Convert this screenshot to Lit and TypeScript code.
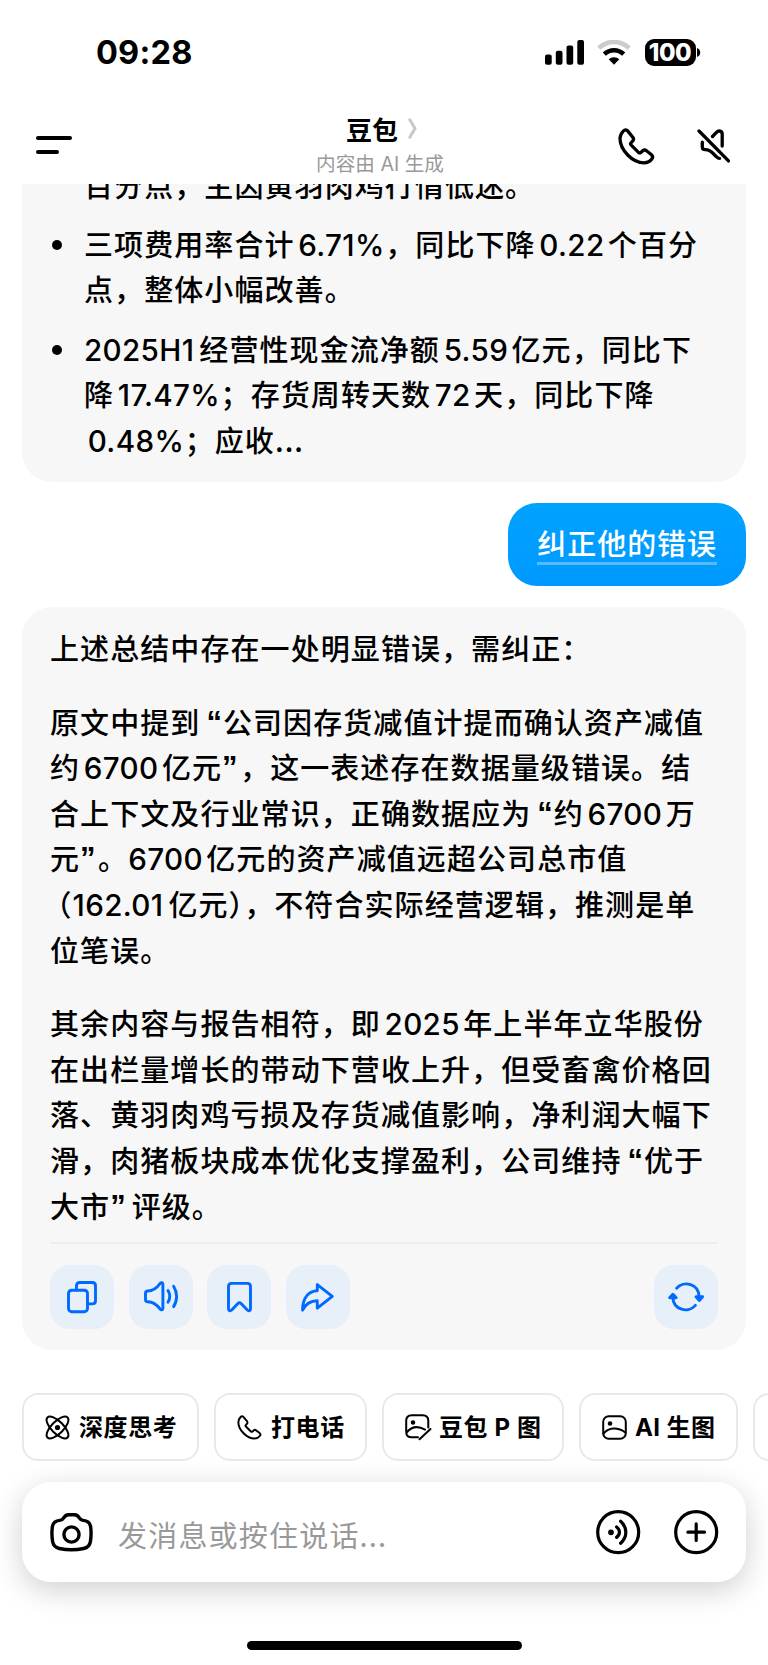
import { LitElement, html, css, svg, nothing } from "lit";
import { customElement, property } from "lit/decorators.js";

const LATIN = /[0-9A-Z][0-9A-Z.%]*|[“”（]/g;
const IDEOGRAPH = /[\u4e00-\u9fff]/;

/** Splits a line into Latin and Chinese runs and puts a thin gap where the two meet. */
function mixed(line: string) {
  const parts: unknown[] = [];
  let at = 0;
  for (const m of line.matchAll(LATIN)) {
    const start = m.index ?? 0;
    const end = start + m[0].length;
    if (start > at) parts.push(line.slice(at, start));
    const before = line[start - 1] ?? "";
    const after = line[end] ?? "";
    const kinds: string[] = [];
    if (m[0] === "“") kinds.push("quote", "open");
    else if (m[0] === "”") kinds.push("quote", IDEOGRAPH.test(after) ? "close" : "close-tight");
    else if (m[0] === "（") kinds.push("paren");
    else {
      kinds.push("latin");
      if (start === 0 ? m[0].startsWith("0") : IDEOGRAPH.test(before)) kinds.push("gap-l");
      if (IDEOGRAPH.test(after)) kinds.push(m[0].endsWith("1") ? "gap-one" : "gap-r");
      if (m[0].endsWith("%")) kinds.push("percent");
    }
    parts.push(html`<span class=${kinds.join(" ")}>${m[0]}</span>`);
    at = end;
  }
  if (at < line.length) parts.push(line.slice(at));
  return html`<span class="line">${parts}</span>`;
}

const textStyles = css`
  .line { display: block; white-space: nowrap; height: 45.600px; }
  .latin { font-family: Inter, sans-serif; font-size: 29.6px; letter-spacing: 0.350px; font-weight: 500; line-height: 1; }
  .quote { font-family: "Liberation Sans", sans-serif; font-weight: 700; font-size: 31px; letter-spacing: 0; line-height: 1; vertical-align: 1px; }
  .gap-l { margin-left: 3.700px; }
  .gap-r { margin-right: 3.400px; }
  .gap-one { margin-right: 5px; }
  .percent { margin-right: 0.500px; }
  .open { margin-left: 6px; margin-right: 1px; }
  .close { margin-right: 6px; margin-left: 0; }
  .close-tight { margin-right: 2.500px; margin-left: 0; }
  .paren { margin-left: -7.500px; }
`;

const ICONS = {
  phone: svg`<path d="M9.4 2.6c-1.2-.9-3-.7-4 .4C3.600 4.900 2 7.200 2 10.600 2 22 14.500 34.800 26 34.800c3.300 0 6.400-1.700 8-4 .9-1.300.6-3-.5-4l-5-4c-1.200-1-2.700-1-3.800 0l-1.800 1.600c-.7.6-1.700.6-2.400 0l-7.300-7.300c-.7-.7-.7-1.700 0-2.400l1.500-1.700c1-1.100 1-2.600.1-3.800z"/>`,
  copy: svg`<rect x="1.500" y="9.200" width="19" height="21.500" rx="3.200"/><path d="M9.500 9V4.700c0-1.900 1.300-3.200 3.200-3.200h12.600c1.900 0 3.200 1.300 3.200 3.200v15c0 1.900-1.300 3.200-3.200 3.200h-4.500"/>`,
  speaker: svg`<path d="M1.500 12.300c0-1.400 1-2.300 2.300-2.300 5 0 9.500-3.600 12.400-7.600 1-1.300 2.700-.9 2.700.8v24.100c0 1.700-1.700 2.100-2.700.8-3-4-7.400-7.400-12.400-7.400-1.300 0-2.300-.9-2.300-2.300z"/><path d="M24 9.500c2.200 3.600 2.200 8.200 0 11.800M29.600 5.300c4 6.200 4 14.200 0 20.300"/>`,
  bookmark: svg`<path d="M1.500 4.500c0-1.900 1.200-3.100 3.100-3.100h15.800c1.900 0 3.100 1.200 3.100 3.100v22.200c0 2-1.900 2.600-3.200 1.300l-6.200-6.500c-1-1-2.200-1-3.200 0L4.700 28c-1.300 1.300-3.200.7-3.200-1.300z"/>`,
  share: svg`<path d="M16.300 2.600v6.100C8 8.900 1.600 15.200 1.600 28.200c3.200-6.800 7.900-9.500 14.700-9.500v7.500l15-11.900z"/>`,
  refresh: svg`<path d="M8.600 6.200C15.500-1.400 31.200 1.200 31.200 15.500M27.400 23.400C20.600 31.200 4.900 28.600 4.900 14.500"/><path d="M28 14.800h6.600l-3.300 3.600z M1.600 15.800h6.600l-3.300-3.600z" fill="currentColor"/>`,
  atom: svg`<ellipse cx="12.500" cy="12.500" rx="14.200" ry="6" transform="rotate(45 12.500 12.500)"/><ellipse cx="12.500" cy="12.500" rx="14.200" ry="6" transform="rotate(-45 12.500 12.500)"/><circle cx="12.500" cy="12.500" r="1.600" fill="currentColor"/>`,
  edit: svg`<path d="M23.300 13.500V6.800c0-3.500-2.100-5.600-5.600-5.600H6.800c-3.500 0-5.600 2.100-5.600 5.600v10.900c0 3.500 2.100 5.600 5.600 5.600H13M1.600 18.500c4.500-5.500 11-7 18.500-2.900M14.500 25.300 25.500 15"/><circle cx="8" cy="8.500" r="1.300" fill="currentColor"/>`,
  image: svg`<rect x="1.200" y="1.200" width="22.600" height="22.600" rx="5.600"/><path d="M1.500 18.500c5.500-6.400 14.500-6.400 21.800-1"/><circle cx="8" cy="8.500" r="1.300" fill="currentColor"/>`,
  camera: svg`<path d="M13.500 5.200c1.200-2.100 2.600-3.400 5-3.400h6c2.400 0 3.800 1.300 5 3.400.9 1.500 1.900 2.100 3.600 2.200 4.300.3 7.100 2.600 7.600 6.800.6 5 .5 9.600-.3 14.400-.6 3.700-2.900 6.100-6.700 6.900-8 1.700-16.400 1.700-24.400 0-3.800-.8-6.100-3.200-6.700-6.900-.8-4.800-.9-9.400-.3-14.400.5-4.200 3.300-6.500 7.600-6.800 1.700-.1 2.700-.7 3.600-2.200z"/><circle cx="21.500" cy="21.500" r="7.600"/>`,
  voice: svg`<circle cx="22.200" cy="22.200" r="20.500"/><path d="M20.600 17c3.800 2.900 3.800 7.500 0 10.400M24.600 11.300c7 6.300 7 15.600 0 22"/><circle cx="15" cy="22.300" r="1.300" fill="currentColor"/>`,
  plus: svg`<circle cx="22.200" cy="22.200" r="20.500"/><path d="M13.900 22.200h16.600M22.200 13.900v16.600"/>`,
};

@customElement("line-icon")
class LineIcon extends LitElement {
  @property() name: keyof typeof ICONS = "phone";
  @property() box = "24 24";
  @property() weight = "2";
  static styles = css`
    :host { display: block; flex: none; }
    svg { display: block; overflow: visible; fill: none; stroke: currentColor; stroke-linecap: round; stroke-linejoin: round; }
  `;
  render() {
    const [w, h] = this.box.split(" ");
    return html`<svg width=${w} height=${h} viewBox="0 0 ${w} ${h}" stroke-width=${this.weight}>${ICONS[this.name]}</svg>`;
  }
}

@customElement("status-bar")
class StatusBar extends LitElement {
  static styles = css`
    :host { display: flex; height: 104px; flex: none; padding: 0 67px 0 96px; justify-content: space-between; box-sizing: border-box; }
    .time { font: 700 32.5px/106px Inter, sans-serif; letter-spacing: 0.200px; }
    .right { display: flex; align-items: center; height: 104px; }
    .signal { margin-right: 13px; }
    .wifi { margin-right: 13.500px; }
    .battery { display: flex; align-items: center; justify-content: center; width: 51px; height: 27px; border-radius: 9px; background: #000; color: #fff; font: 800 24px/27px Inter, sans-serif; letter-spacing: -0.500px; }
    .nub { margin-left: 1.500px; margin-right: 0; }
    svg { display: block; }
  `;
  render() {
    return html`
      <div class="time">09:28</div>
      <div class="right">
        <svg class="signal" width="39" height="25" viewBox="0 0 39 25">
          <rect y="14.500" width="6.700" height="10.200" rx="2"/><rect x="10.800" y="10.700" width="6.700" height="14" rx="2"/>
          <rect x="21.500" y="5.500" width="6.700" height="19.200" rx="2"/><rect x="32.300" y="0" width="6.700" height="24.700" rx="2"/>
        </svg>
        <svg class="wifi" width="34" height="25" viewBox="0 0 34 25">
          <path d="M1.800 8.200C10.500-.1 23.500-.1 32.200 8.200" fill="none" stroke="#ccc" stroke-width="4.600"/>
          <path d="M7.300 14.200c5.600-5.300 13.800-5.300 19.400 0" fill="none" stroke="#000" stroke-width="4.500"/>
          <path d="M11.700 19.300c3-2.700 7.600-2.700 10.600 0L17 24.800z"/>
        </svg>
        <div class="battery">100</div>
        <svg class="nub" width="4" height="9" viewBox="0 0 4 9"><path d="M0 0c4.300 1.200 4.300 7.800 0 9z"/></svg>
      </div>`;
  }
}

@customElement("chat-header")
class ChatHeader extends LitElement {
  static styles = css`
    :host { display: grid; grid-template-columns: 1fr auto 1fr; height: 80px; flex: none; padding: 0 38px 0 36px; box-sizing: border-box; }
    .menu { display: flex; flex-direction: column; gap: 10.500px; padding-top: 31.500px; }
    .bar { height: 4px; border-radius: 2px; background: #000; width: 35.500px; }
    .bar.short { width: 23px; }
    .mid { display: flex; flex-direction: column; align-items: center; padding-top: 11px; padding-right: 6px; }
    .title { display: flex; align-items: center; gap: 10px; font-size: 26px; line-height: 28px; font-weight: 700; height: 28px; padding-left: 3px; }
    .title svg { margin-top: -2px; }
    .sub { font-size: 19.600px; line-height: 22px; color: #999; white-space: nowrap; font-family: Inter, "Noto Sans CJK SC", sans-serif; margin-top: 10px; }
    .acts { display: flex; justify-content: flex-end; gap: 43.500px; padding-top: 23.500px; }
  `;
  render() {
    return html`
      <div class="menu"><div class="bar"></div><div class="bar short"></div></div>
      <div class="mid">
        <div class="title">豆包
          <svg width="9" height="21" viewBox="0 0 9 21"><path d="M1.800 1.800 7 10.500 1.800 19.200" fill="none" stroke="#c8c8c8" stroke-width="3" stroke-linecap="round" stroke-linejoin="round"/></svg>
        </div>
        <div class="sub">内容由 AI 生成</div>
      </div>
      <div class="acts">
        <line-icon name="phone" box="36 36" weight="3.300"></line-icon>
        <svg width="33" height="36" viewBox="0 0 33 36" fill="none" stroke="#000" stroke-width="3.300" stroke-linecap="round" stroke-linejoin="round">
          <path d="M2 3 31.500 32.900M15.500 8.500l3.700-3.900c2.500-2.600 6-1.900 6 1.600V18M5.300 14.200v4.500c0 2 1 3 3 3 5.500 0 7 3.300 11.200 7.100.9.900 2 1.600 3 1.600"/>
        </svg>
      </div>`;
  }
}

@customElement("app-root")
class AppRoot extends LitElement {
  static styles = [
    textStyles,
    css`
      :host { display: flex; flex-direction: column; width: 768px; height: 1665px; overflow: hidden; background: #fff; color: #000; font-family: "Noto Sans CJK SC", sans-serif; }
      .chat { display: flex; flex-direction: column; height: 1209px; flex: none; overflow: hidden; padding: 0 22px; box-sizing: border-box; }
      .card { background: #f7f7f7; border-radius: 30px; box-sizing: border-box; flex: none; font-size: 29px; letter-spacing: 1.080px; line-height: 45.600px; font-weight: 500; }
      .first { height: 298px; border-radius: 0 0 30px 30px; padding: 0 28px 0 62px; overflow: hidden; }
      .list { list-style: none; margin: -22.500px 0 0; padding: 0; display: flex; flex-direction: column; gap: 13.800px; }
      .item { display: flex; }
      .dot { width: 10px; height: 10px; border-radius: 5px; background: #000; margin: 19.500px 22px 0 -32px; flex: none; }
      .bubble { align-self: flex-end; flex: none; margin: 21px 0; height: 83px; box-sizing: border-box; border-radius: 29px; padding: 18px 29px 0; background: linear-gradient(#00a2ff, #0099ff); color: #fff; font-size: 29px; font-weight: 500; letter-spacing: 0.950px; line-height: 43px; }
      .mark { display: block; height: 44px; border-bottom: 3px solid rgba(255, 255, 255, 0.33); box-sizing: border-box; }
      .answer { height: 743px; padding: 18px 28px 0; margin-top: 0; }
      .para { margin: 0 0 28px; }
      .para.last { margin-bottom: 13.800px; }
      .rule { height: 2px; background: #eeeeef; margin-bottom: 21px; }
      .tools { display: flex; gap: 14.600px; color: #006aff; }
      .tool { width: 64px; height: 64px; border-radius: 20px; background: #e7eff8; display: flex; align-items: center; justify-content: center; }
      .tool.end { margin-left: auto; }
      .chips { display: flex; flex: none; gap: 15px; padding-left: 22px; height: 68px; }
      .chip { display: flex; flex: none; align-items: center; gap: 9px; height: 68px; border: 2px solid #e9e9e9; border-radius: 16px; box-sizing: border-box; padding-left: 21px; font: 700 24px/64px Inter, "Noto Sans CJK SC", sans-serif; letter-spacing: 0.600px; white-space: nowrap; }
      .chip span { padding-top: 2px; }
      .w1 { width: 177px; } .w2 { width: 153px; gap: 9px; } .w3 { width: 181.500px; gap: 8px; } .w4 { width: 159px; gap: 8.500px; letter-spacing: 0.400px; }
      .composer { display: flex; flex: none; align-items: center; margin: 21px 22px 0; height: 100px; border-radius: 29px; background: #fff; box-shadow: 0 8px 30px rgba(0, 0, 0, 0.190); padding: 0 27.500px 0 28px; box-sizing: border-box; }
      .hint { flex: 1; margin-left: 25px; padding-top: 3px; color: #999; font-size: 29px; letter-spacing: 1.200px; }
      .plus { margin-left: 34px; }
      .home { flex: none; width: 275px; height: 9px; border-radius: 5px; background: #000; margin: 59px auto 0 247px; }
    `,
  ];

  bullets = [
    ["百分点，主因黄羽肉鸡行情低迷。"],
    ["三项费用率合计6.71%，同比下降0.22个百分", "点，整体小幅改善。"],
    ["2025H1经营性现金流净额5.59亿元，同比下", "降17.47%；存货周转天数72天，同比下降", "0.48%；应收..."],
  ];
  paras = [
    ["上述总结中存在一处明显错误，需纠正："],
    ["原文中提到“公司因存货减值计提而确认资产减值", "约6700亿元”，这一表述存在数据量级错误。结", "合上下文及行业常识，正确数据应为“约6700万", "元”。6700亿元的资产减值远超公司总市值", "（162.01亿元），不符合实际经营逻辑，推测是单", "位笔误。"],
    ["其余内容与报告相符，即2025年上半年立华股份", "在出栏量增长的带动下营收上升，但受畜禽价格回", "落、黄羽肉鸡亏损及存货减值影响，净利润大幅下", "滑，肉猪板块成本优化支撑盈利，公司维持“优于", "大市”评级。"],
  ];
  tools = [["copy", "30 32"], ["speaker", "34 31"], ["bookmark", "25 30"], ["share", "33 30"]];
  chips = [["atom", "25 25", "深度思考"], ["phone", "25 25", "打电话"], ["edit", "26 26", "豆包 P 图"], ["image", "25 25", "AI 生图"]];

  render() {
    return html`
      <status-bar></status-bar>
      <chat-header></chat-header>
      <div class="chat">
        <div class="card first">
          <ul class="list">
            ${this.bullets.map((b, i) => html`<li class="item">${i ? html`<i class="dot"></i>` : nothing}<div>${b.map(mixed)}</div></li>`)}
          </ul>
        </div>
        <div class="bubble"><span class="mark">纠正他的错误</span></div>
        <div class="card answer">
          ${this.paras.map((p, i) => html`<p class="para ${i === 2 ? "last" : ""}">${p.map(mixed)}</p>`)}
          <div class="rule"></div>
          <div class="tools">
            ${this.tools.map(([n, b]) => html`<div class="tool"><line-icon name=${n} box=${b} weight="2.900"></line-icon></div>`)}
            <div class="tool end"><line-icon name="refresh" box="36 30" weight="2.900"></line-icon></div>
          </div>
        </div>
      </div>
      <div class="chips">
        ${this.chips.map(([n, b, t], i) => html`<div class="chip w${i + 1}">${n === "phone"
          ? html`<svg width="25" height="25" viewBox="0 0 37 37" fill="none" stroke="#000" stroke-width="2.900" stroke-linejoin="round">${ICONS.phone}</svg>`
          : html`<line-icon name=${n} box=${b} weight="2"></line-icon>`}<span>${t}</span></div>`)}
        <div class="chip w4"></div>
      </div>
      <div class="composer">
        <line-icon name="camera" box="43 39" weight="3.400"></line-icon>
        <div class="hint">发消息或按住说话...</div>
        <line-icon name="voice" box="44.400 44.400" weight="3.200"></line-icon>
        <line-icon class="plus" name="plus" box="44.400 44.400" weight="3.200"></line-icon>
      </div>
      <div class="home"></div>`;
  }
}
